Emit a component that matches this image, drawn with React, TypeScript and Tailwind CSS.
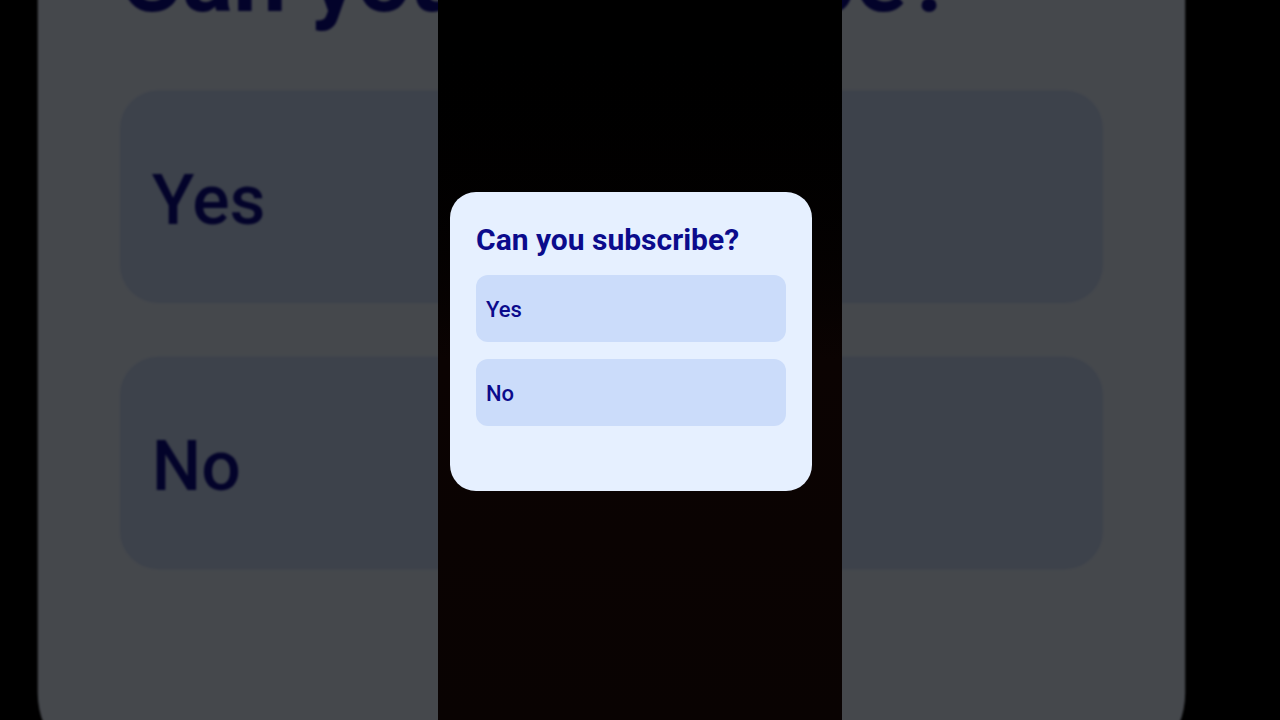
const options = ['Yes', 'No']

function Poll() {
  return (
    <div className="w-[362px] rounded-[26px] bg-[#e6f0ff] px-[26px] pt-[30px] pb-[65px]">
      <h2 className="h-[36px] text-[30px] font-bold leading-[36px] text-[#0b0b8c]">Can you subscribe?</h2>
      <div className="mt-[17px] flex flex-col gap-[17px]">
        {options.map((label) => (
          <button
            key={label}
            type="button"
            className="flex h-[67px] w-full items-center rounded-[12px] bg-[#cbdcfa] px-[10px] pt-[2px] text-left text-[22px] font-medium text-[#0b0b8c]"
          >
            {label}
          </button>
        ))}
      </div>
    </div>
  )
}

export default function App() {
  return (
    <div className="relative h-[720px] w-full overflow-hidden bg-black font-['Roboto','Liberation_Sans',sans-serif]">
      {/* blown-up backdrop of the same card, zoomed around the page centre */}
      <div className="pointer-events-none absolute inset-0 origin-center scale-[3.17] blur-[0.4px]">
        <div className="absolute left-[450px] top-[192px]">
          <Poll />
        </div>
      </div>
      <div className="absolute inset-0 bg-black/70" />

      <div className="relative flex h-full justify-center">
        <div className="h-full w-[404px] bg-gradient-to-b from-black via-[#0b0302] to-[#090302] pl-[12px] pt-[192px]">
          <Poll />
        </div>
      </div>
    </div>
  )
}
